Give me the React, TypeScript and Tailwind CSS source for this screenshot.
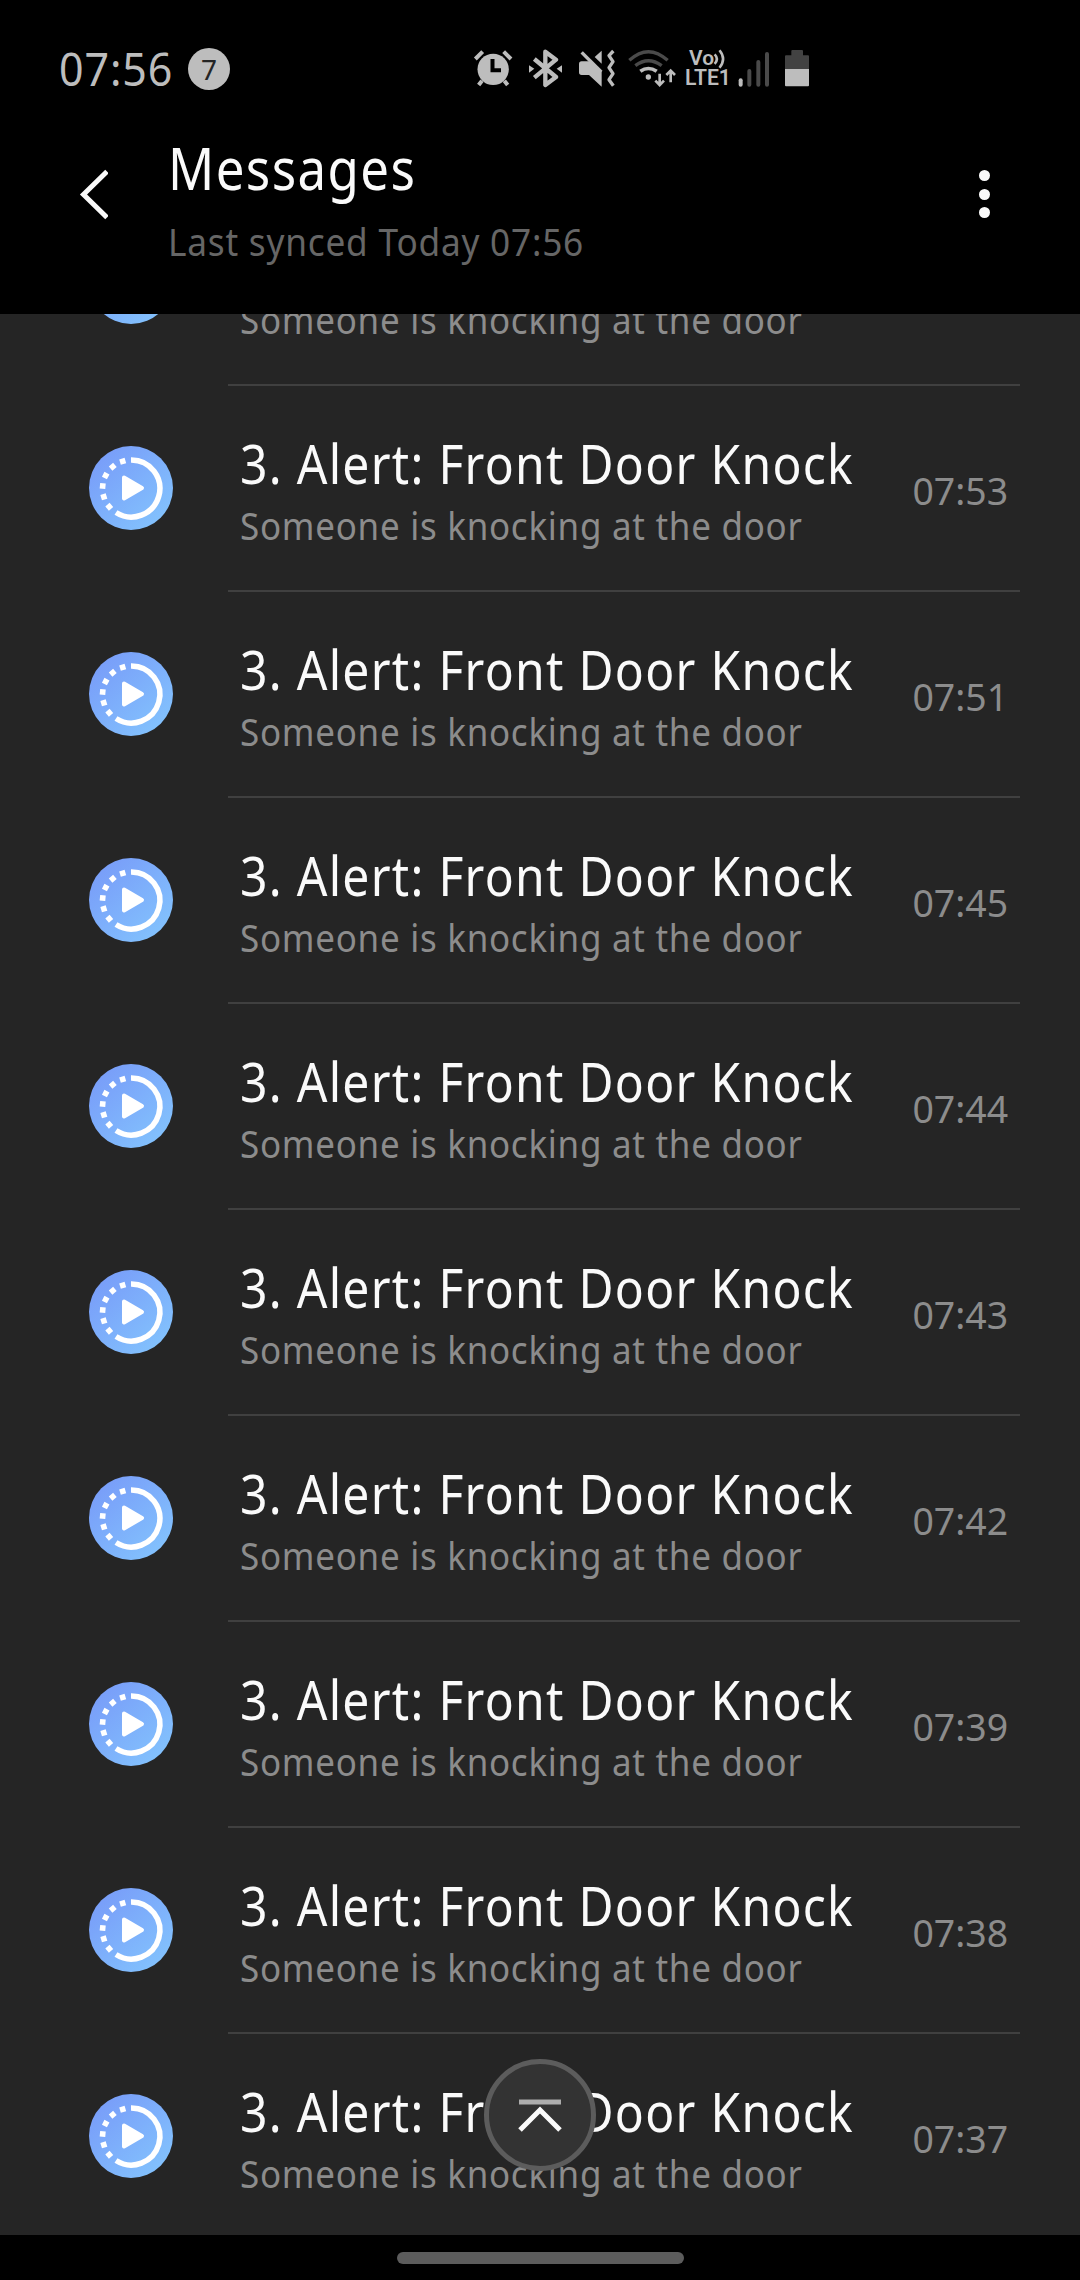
import type { ReactNode } from "react";
import clsx from "clsx";

interface Message {
    title: string;
    body: string;
    time: string;
}

const TIMES = ["07:54", "07:53", "07:51", "07:45", "07:44", "07:43", "07:42", "07:39", "07:38", "07:37"];

const MESSAGES: Message[] = TIMES.map((time) => ({
    title: "3. Alert: Front Door Knock",
    body: "Someone is knocking at the door",
    time,
}));

/* ------------------------------------------------------------------ */
/* Status bar                                                          */
/* ------------------------------------------------------------------ */

// All the status glyphs share one drawing height (117 units = 39px).
function StatusIcon({ viewBox, className, children }: { viewBox: string; className: string; children: ReactNode }) {
    return (
        <svg viewBox={viewBox} fill="none" className={clsx("h-[39px] shrink-0 text-[#bdbdbd]", className)}>
            {children}
        </svg>
    );
}

function StatusBar() {
    return (
        <div className="flex h-[135px] shrink-0 items-center pt-[2px]">
            <span className="ml-[58.5px] w-[129.5px] shrink-0">
                <span className="inline-block origin-left scale-x-[0.955] text-[45px] leading-[60px] tracking-[0.02em] text-[#bdbdbd]">07:56</span>
            </span>
            <span className="flex size-[42px] shrink-0 items-center justify-center rounded-full bg-[#bdbdbd] text-[28px] leading-none text-[#252525]">
                7
            </span>

            {/* alarm */}
            <StatusIcon viewBox="39 38 120 117" className="ml-[243px] w-[40px]">
                <path d="M46 68l22-22M131 46l22 22M66 133l-10 13M133 133l10 13" stroke="currentColor" strokeWidth="12" />
                <circle cx="99.500" cy="99" r="47" fill="currentColor" />
                <path d="M97.500 68v34H123" stroke="#000" strokeWidth="12" />
            </StatusIcon>
            {/* bluetooth */}
            <StatusIcon viewBox="204 38 105 117" className="ml-[15px] w-[35px]">
                <path
                    d="M223 68l65 54-32 24V46l32 24-65 54"
                    stroke="currentColor"
                    strokeWidth="13"
                    strokeLinejoin="round"
                />
                <path d="M207 87l16 10-16 12zM306 87l-16 10 16 12z" fill="currentColor" />
            </StatusIcon>
            {/* sound off / vibrate */}
            <StatusIcon viewBox="354 38 114 117" className="ml-[15px] w-[38px]">
                <path d="M365 75h29l31 30v46l-38-35h-22q-8 0-8-8V83q0-8 8-8z" fill="currentColor" />
                <path d="M365 48l59 59" stroke="currentColor" strokeWidth="10" />
                <path d="M425 43v39l-21-20z" fill="currentColor" />
                <path d="M460 44l-13 14 12 18-12 18 12 18-12 18 13 18" stroke="currentColor" strokeWidth="10" strokeLinejoin="round" />
            </StatusIcon>
            {/* wifi */}
            <StatusIcon viewBox="24 38 147 117" className="ml-[12px] w-[49px]">
                <path d="M28 72q57-52 115 0M46 88q39-30 79 0" stroke="#4a4a4a" strokeWidth="10" />
                <path d="M61 105q24-17 49 0" stroke="currentColor" strokeWidth="11" />
                <circle cx="85" cy="122" r="8" fill="currentColor" />
                <path d="M119 112v33M106 133l13 13 13-13M152 138v-33M139 116l13-13 13 13" stroke="currentColor" strokeWidth="8" />
            </StatusIcon>

            {/* VoLTE label */}
            <div className="ml-[8px] flex h-[39px] w-[44px] shrink-0 flex-col items-start font-['Roboto'] text-[#bdbdbd]">
                <div className="flex h-[19px] items-center">
                    <span className="w-[28px] pl-[4px] text-[21px] leading-[19px] font-semibold">Vo</span>
                    <svg viewBox="0 0 40 60" fill="none" className="h-[20px] w-[13px]">
                        <path d="M5 16q14 14 0 29M20 3q22 27 0 54" stroke="currentColor" strokeWidth="8" />
                    </svg>
                </div>
                <span className="origin-left scale-x-[0.96] text-[22px] leading-[20px] font-semibold">LTE1</span>
            </div>

            {/* signal */}
            <StatusIcon viewBox="354 38 96 117" className="ml-[9px] w-[32px]">
                <path d="M362 132v13" stroke="currentColor" strokeWidth="12" strokeLinecap="round" />
                <path d="M388 104v41M415 77v68M441 53v92" stroke="#4a4a4a" strokeWidth="12" strokeLinecap="round" />
            </StatusIcon>
            {/* battery */}
            <StatusIcon viewBox="492 38 78 117" className="ml-[14px] w-[26px]">
                <path d="M517 41h29q3 0 3 3v13h15q3 0 3 3v38h-72V60q0-3 3-3h16V44q0-3 3-3z" fill="#424242" />
                <path d="M495 98h72v49q0 3-3 3h-66q-3 0-3-3z" fill="currentColor" />
            </StatusIcon>
        </div>
    );
}

/* ------------------------------------------------------------------ */
/* Header                                                              */
/* ------------------------------------------------------------------ */

function Header() {
    return (
        <header className="relative z-10 flex h-[179px] shrink-0 bg-black">
            <button className="mt-[33px] ml-[76px] h-[52px] w-[32px] shrink-0" aria-label="Back">
                <svg viewBox="0 0 32 52" fill="none" className="h-[52px] w-[32px]">
                    <path d="M31 3.500L7.500 26.500 31 49.500" stroke="#fafafa" strokeWidth="5" />
                </svg>
            </button>
            <div className="ml-[60px] flex flex-1 flex-col items-start gap-[16px] pt-px whitespace-nowrap">
                <h1 className="origin-left scale-x-[0.88] text-[58px] leading-[64px] tracking-[0.027em] text-[#fafafa]">Messages</h1>
                <p className="origin-left scale-x-[0.915] text-[38.5px] leading-[50px] tracking-[0.022em] text-[#666666]">Last synced Today 07:56</p>
            </div>
            <button className="mt-[35px] mr-[90.5px] flex h-[48px] w-[11px] shrink-0 flex-col justify-between" aria-label="More options">
                <span className="size-[11px] rounded-full bg-[#fafafa]" />
                <span className="size-[11px] rounded-full bg-[#fafafa]" />
                <span className="size-[11px] rounded-full bg-[#fafafa]" />
            </button>
        </header>
    );
}

/* ------------------------------------------------------------------ */
/* List                                                                */
/* ------------------------------------------------------------------ */

function RoutineIcon() {
    return (
        <svg viewBox="0 0 84 84" fill="none" className="size-[84px] shrink-0">
            <defs>
                <linearGradient id="routine" x1="14" y1="12" x2="70" y2="72" gradientUnits="userSpaceOnUse">
                    <stop stopColor="#799ff9" />
                    <stop offset="1" stopColor="#82c0fd" />
                </linearGradient>
            </defs>
            <circle cx="42" cy="42" r="42" fill="url(#routine)" />
            <path d="M42 14A28.500 28.500 0 1 1 27 66.500" stroke="#fff" strokeWidth="5.500" />
            {/* the dotted part of the ring */}
            <g fill="#fff">
                {[-130, -107, -85, -63, -40, -17].map((deg) => (
                    <rect key={deg} x="39.200" y="11.300" width="5.600" height="5.600" transform={`rotate(${deg} 42 42.500)`} />
                ))}
            </g>
            <path d="M35 31.500L53 42 35 52.500z" fill="#fff" stroke="#fff" strokeWidth="4" strokeLinejoin="round" />
        </svg>
    );
}

function MessageRow({ message }: { message: Message }) {
    return (
        <li className="flex h-[206px] shrink-0 pl-[89px]">
            <div className="flex h-[204px] items-center">
                <RoutineIcon />
            </div>
            <div className="ml-[55px] flex w-[792px] shrink-0 justify-between border-b-2 border-[#404040] pr-[12px] pl-[12px] whitespace-nowrap">
                <div className="flex w-[650px] shrink-0 flex-col items-start gap-[7px] pt-[47px]">
                    <h2 className="origin-left scale-x-[0.89] text-[54px] leading-[60px] tracking-[0.0265em] text-[#fafafa]">{message.title}</h2>
                    <p className="origin-left scale-x-[0.92] text-[38px] leading-[50px] tracking-[0.021em] text-[#8c8c8c]">{message.body}</p>
                </div>
                <time className="mt-[79px] h-[50px] origin-right scale-x-[0.985] text-[38px] leading-[50px] text-[#8c8c8c]">{message.time}</time>
            </div>
        </li>
    );
}

function ScrollTopButton() {
    return (
        <button
            className="absolute bottom-[64px] left-[484px] flex size-[112px] items-center justify-center rounded-full border-[5px] border-[#5c5c5c] bg-[#333333]"
            aria-label="Scroll to top"
        >
            <svg viewBox="0 0 44 34" fill="none" className="h-[34px] w-[44px]">
                <path d="M1 4h42" stroke="#adadad" strokeWidth="5" />
                <path d="M2 32l20-20 20 20" stroke="#fafafa" strokeWidth="5" />
            </svg>
        </button>
    );
}

export default function App() {
    return (
        <div className="flex h-[2280px] w-[1080px] flex-col overflow-hidden bg-black font-['Noto_Sans',sans-serif]">
            <StatusBar />
            <Header />
            <main className="relative h-[1921px] shrink-0 overflow-hidden bg-[#252525]">
                <ul className="-mt-[134px] flex flex-col">
                    {MESSAGES.map((m) => (
                        <MessageRow key={m.time} message={m} />
                    ))}
                </ul>
                <ScrollTopButton />
            </main>
            <div className="flex flex-1 justify-center pt-[17px]">
                <div className="h-[12px] w-[287px] rounded-full bg-[#5c5c5c]" />
            </div>
        </div>
    );
}
